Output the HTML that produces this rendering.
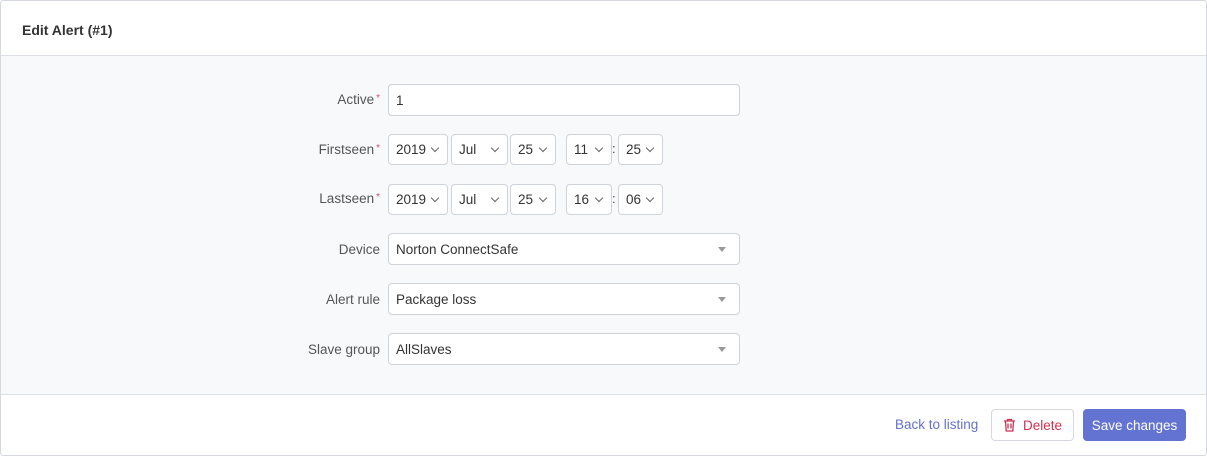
<!DOCTYPE html>
<html><head><style>
*{box-sizing:border-box;margin:0;padding:0}
body{width:1207px;height:456px;background:#fff;font-family:"Liberation Sans",sans-serif;font-size:14px;color:#333;position:relative;overflow:hidden}
.card{position:absolute;left:0;top:0;width:1207px;height:456px;border:1px solid #d5d8de;border-radius:3px;background:#fff}
.hdr{position:absolute;left:0;top:0;width:1205px;height:55px;border-bottom:1px solid #dcdfe5;font-weight:bold;font-size:14px;padding:21px 0 0 21px;color:#333}
.body{position:absolute;left:0;top:55px;width:1205px;height:339px;background:#f8f9fb;border-bottom:1px solid #dcdfe5}
.lbl{position:absolute;right:827px;font-size:13.5px;color:#555;text-align:right}
.lbl span{color:#d0506e;font-size:10px;vertical-align:3px;margin-left:2px}
.in{position:absolute;background:#fff;border:1px solid #cfd3da;border-radius:4px;font-size:13.5px;color:#333;padding-left:7px;display:flex;align-items:center}
.sel::after{content:"";position:absolute;right:9px;top:10px;width:5px;height:5px;border-right:1.3px solid #666;border-bottom:1.3px solid #666;transform:rotate(45deg)}
.dd::after{content:"";position:absolute;right:13px;top:13px;border-left:4px solid transparent;border-right:4px solid transparent;border-top:5px solid #999}
.colon{position:absolute;left:612px;font-size:13px;color:#444}
</style></head><body>
<div class="card">
<div class="hdr">Edit Alert (#1)</div>
<div class="body"></div>
</div>
<div class="lbl" style="top:92px">Active<span>*</span></div>
<div class="in" style="left:388px;top:84px;width:352px;height:32px">1</div>

<div class="lbl" style="top:142px">Firstseen<span>*</span></div>
<div class="in sel" style="left:388px;top:134px;width:60px;height:31px">2019</div>
<div class="in sel" style="left:451px;top:134px;width:57px;height:31px">Jul</div>
<div class="in sel" style="left:510px;top:134px;width:46px;height:31px">25</div>
<div class="in sel" style="left:566px;top:134px;width:46px;height:31px">11</div>
<div class="colon" style="top:141px">:</div>
<div class="in sel" style="left:618px;top:134px;width:45px;height:31px">25</div>

<div class="lbl" style="top:191px">Lastseen<span>*</span></div>
<div class="in sel" style="left:388px;top:184px;width:60px;height:31px">2019</div>
<div class="in sel" style="left:451px;top:184px;width:57px;height:31px">Jul</div>
<div class="in sel" style="left:510px;top:184px;width:46px;height:31px">25</div>
<div class="in sel" style="left:566px;top:184px;width:46px;height:31px">16</div>
<div class="colon" style="top:191px">:</div>
<div class="in sel" style="left:618px;top:184px;width:45px;height:31px">06</div>

<div class="lbl" style="top:242px">Device</div>
<div class="in dd" style="left:388px;top:233px;width:352px;height:32px">Norton ConnectSafe</div>
<div class="lbl" style="top:292px">Alert rule</div>
<div class="in dd" style="left:388px;top:283px;width:352px;height:32px">Package loss</div>
<div class="lbl" style="top:342px">Slave group</div>
<div class="in dd" style="left:388px;top:333px;width:352px;height:32px">AllSlaves</div>

<div style="position:absolute;left:895px;top:417px;font-size:13.5px;color:#6570d0">Back to listing</div>
<div style="position:absolute;left:991px;top:409px;width:83px;height:32px;border:1px solid #d5d8de;border-radius:4px;background:#fff;color:#d03050;font-size:13.5px;display:flex;align-items:center;padding-left:11px">
<svg width="13" height="14" viewBox="0 0 13 14" style="margin-right:7px"><path d="M1 3h11M4.5 3V1.5h4V3M2.5 3l.7 10h6.6l.7-10M5 5.5v5M8 5.5v5" fill="none" stroke="#d03050" stroke-width="1.3"/></svg>Delete</div>
<div style="position:absolute;left:1083px;top:409px;width:103px;height:32px;border-radius:4px;background:#6373d2;color:#fff;font-size:13.5px;display:flex;align-items:center;justify-content:center">Save changes</div>
</body></html>
